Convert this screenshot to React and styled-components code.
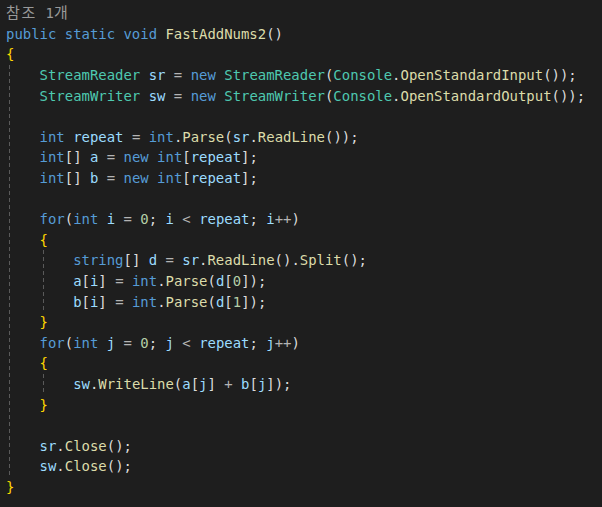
import styled, { createGlobalStyle } from 'styled-components';

const GlobalStyle = createGlobalStyle`
  body {
    margin: 0;
    background: #1e1e1e;
  }
`;

const colors = {
  kw: '#569cd6',
  type: '#4ec9b0',
  method: '#dcdcaa',
  var: '#9cdcfe',
  num: '#b5cea8',
  punct: '#dcdcdc',
  op: '#b4b4b4',
  brace: '#ffd700',
};

const Editor = styled.div`
  min-height: 100vh;
  padding-left: 6px;
  background: #1e1e1e;
  font-family: 'DejaVu Sans Mono', 'Noto Sans CJK KR', monospace;
  font-size: 13.95px;
  color: #dcdcdc;
`;

const CodeLens = styled.div`
  height: 23.7px;
  line-height: 23.7px;
  color: #999999;
  white-space: pre;
`;

const Hangul = styled.span`
  font-family: 'Noto Sans CJK KR', sans-serif;
  font-size: 15px;
  letter-spacing: 1.8px;
`;

const Line = styled.div`
  height: 20.62px;
  line-height: 20.62px;
  white-space: pre;
`;

const Token = styled.span`
  color: ${({ $kind }) => colors[$kind]};
`;

const Block = styled.div`
  padding-left: 4ch;
  background-image: repeating-linear-gradient(
    to bottom,
    #5a5a5a 0 4px,
    transparent 4px 7px
  );
  background-size: 1px 100%;
  background-repeat: no-repeat;
  background-position: 3px 0;
`;

const line = (...tokens) => ({ line: tokens });
const block = (...items) => ({ block: items });
const blank = { line: [] };

const program = [
  line(['kw', 'public static void '], ['method', 'FastAddNums2'], ['punct', '()']),
  line(['brace', '{']),
  block(
    line(
      ['type', 'StreamReader'], ['punct', ' '], ['var', 'sr'], ['op', ' = '], ['kw', 'new '],
      ['type', 'StreamReader'], ['punct', '('], ['type', 'Console'], ['punct', '.'],
      ['method', 'OpenStandardInput'], ['punct', '());']
    ),
    line(
      ['type', 'StreamWriter'], ['punct', ' '], ['var', 'sw'], ['op', ' = '], ['kw', 'new '],
      ['type', 'StreamWriter'], ['punct', '('], ['type', 'Console'], ['punct', '.'],
      ['method', 'OpenStandardOutput'], ['punct', '());']
    ),
    blank,
    line(
      ['kw', 'int '], ['var', 'repeat'], ['op', ' = '], ['kw', 'int'], ['punct', '.'],
      ['method', 'Parse'], ['punct', '('], ['var', 'sr'], ['punct', '.'],
      ['method', 'ReadLine'], ['punct', '());']
    ),
    line(
      ['kw', 'int'], ['punct', '[] '], ['var', 'a'], ['op', ' = '], ['kw', 'new int'],
      ['punct', '['], ['var', 'repeat'], ['punct', '];']
    ),
    line(
      ['kw', 'int'], ['punct', '[] '], ['var', 'b'], ['op', ' = '], ['kw', 'new int'],
      ['punct', '['], ['var', 'repeat'], ['punct', '];']
    ),
    blank,
    line(
      ['kw', 'for'], ['punct', '('], ['kw', 'int '], ['var', 'i'], ['op', ' = '], ['num', '0'],
      ['punct', '; '], ['var', 'i'], ['op', ' < '], ['var', 'repeat'], ['punct', '; '],
      ['var', 'i'], ['op', '++'], ['punct', ')']
    ),
    line(['brace', '{']),
    block(
      line(
        ['kw', 'string'], ['punct', '[] '], ['var', 'd'], ['op', ' = '], ['var', 'sr'],
        ['punct', '.'], ['method', 'ReadLine'], ['punct', '().'], ['method', 'Split'],
        ['punct', '();']
      ),
      line(
        ['var', 'a'], ['punct', '['], ['var', 'i'], ['punct', ']'], ['op', ' = '], ['kw', 'int'],
        ['punct', '.'], ['method', 'Parse'], ['punct', '('], ['var', 'd'], ['punct', '['],
        ['num', '0'], ['punct', ']);']
      ),
      line(
        ['var', 'b'], ['punct', '['], ['var', 'i'], ['punct', ']'], ['op', ' = '], ['kw', 'int'],
        ['punct', '.'], ['method', 'Parse'], ['punct', '('], ['var', 'd'], ['punct', '['],
        ['num', '1'], ['punct', ']);']
      )
    ),
    line(['brace', '}']),
    line(
      ['kw', 'for'], ['punct', '('], ['kw', 'int '], ['var', 'j'], ['op', ' = '], ['num', '0'],
      ['punct', '; '], ['var', 'j'], ['op', ' < '], ['var', 'repeat'], ['punct', '; '],
      ['var', 'j'], ['op', '++'], ['punct', ')']
    ),
    line(['brace', '{']),
    block(
      line(
        ['var', 'sw'], ['punct', '.'], ['method', 'WriteLine'], ['punct', '('], ['var', 'a'],
        ['punct', '['], ['var', 'j'], ['punct', ']'], ['op', ' + '], ['var', 'b'],
        ['punct', '['], ['var', 'j'], ['punct', ']);']
      )
    ),
    line(['brace', '}']),
    blank,
    line(['var', 'sr'], ['punct', '.'], ['method', 'Close'], ['punct', '();']),
    line(['var', 'sw'], ['punct', '.'], ['method', 'Close'], ['punct', '();'])
  ),
  line(['brace', '}']),
];

function Code({ items }) {
  return items.map((item, i) =>
    item.block ? (
      <Block key={i}>
        <Code items={item.block} />
      </Block>
    ) : (
      <Line key={i}>
        {item.line.map(([kind, text], j) => (
          <Token key={j} $kind={kind}>{text}</Token>
        ))}
      </Line>
    )
  );
}

export default function App() {
  return (
    <>
      <GlobalStyle />
      <Editor>
        <CodeLens>
          <Hangul>참조</Hangul> 1<Hangul>개</Hangul>
        </CodeLens>
        <Code items={program} />
      </Editor>
    </>
  );
}
